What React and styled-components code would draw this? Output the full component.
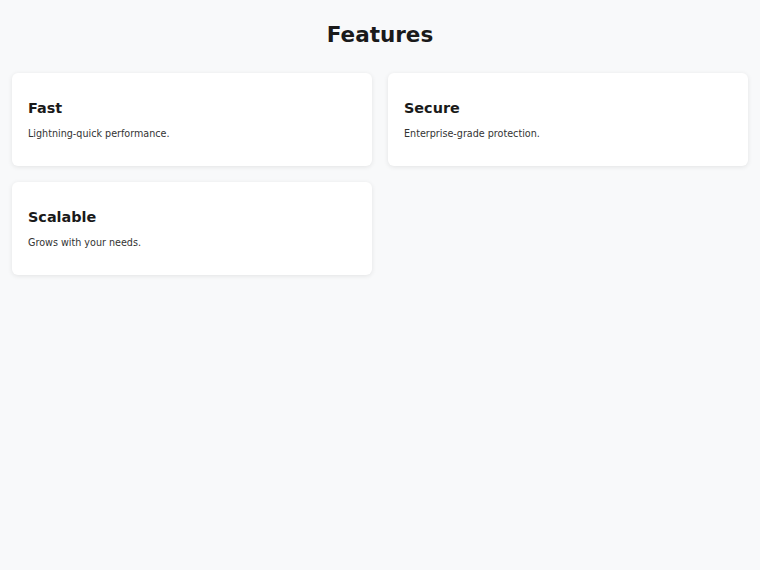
import React from "react";
import styled, { createGlobalStyle } from "styled-components";

const GlobalStyle = createGlobalStyle`
  html, body {
    margin: 0;
    padding: 0;
    background: #f8f9fa;
  }
  body {
    font-family: "DejaVu Sans", sans-serif;
    color: #1a1a1a;
  }
`;

const Page = styled.div`
  padding: 22px 12px 12px;
`;

const Title = styled.h1`
  margin: 0 0 25px;
  text-align: center;
  font-size: 21.5px;
  font-weight: 700;
  line-height: 26px;
  color: #1a1a1a;
`;

const Grid = styled.div`
  display: grid;
  grid-template-columns: repeat(2, 1fr);
  gap: 16px;
`;

const Card = styled.div`
  background: #ffffff;
  border-radius: 6px;
  padding: 27px 16px 26px;
  box-shadow: 0 1px 5px rgba(0, 0, 0, 0.09);
`;

const CardTitle = styled.h3`
  margin: 0 0 11px;
  font-size: 14.4px;
  line-height: 17px;
  font-weight: 700;
  color: #1a1a1a;
`;

const CardText = styled.p`
  margin: 0;
  font-size: 9.6px;
  line-height: 12px;
  color: #333333;
`;

const features = [
  { title: "Fast", text: "Lightning-quick performance." },
  { title: "Secure", text: "Enterprise-grade protection." },
  { title: "Scalable", text: "Grows with your needs." },
];

export default function App() {
  return (
    <>
      <GlobalStyle />
      <Page>
        <Title>Features</Title>
        <Grid>
          {features.map((f) => (
            <Card key={f.title}>
              <CardTitle>{f.title}</CardTitle>
              <CardText>{f.text}</CardText>
            </Card>
          ))}
        </Grid>
      </Page>
    </>
  );
}
